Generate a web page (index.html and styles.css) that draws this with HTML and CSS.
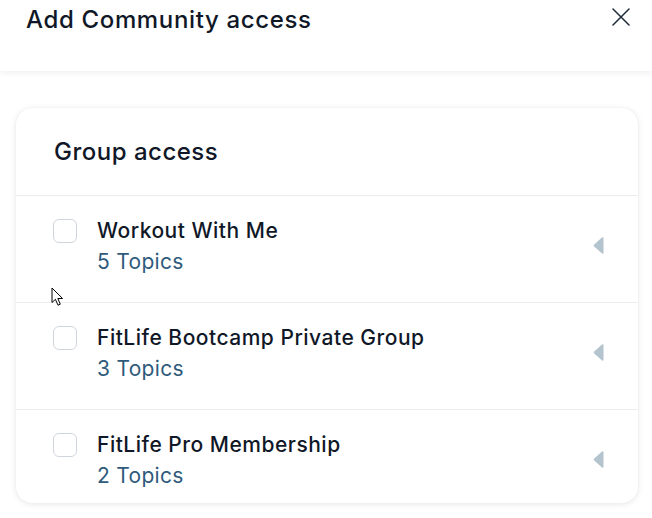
FILE: index.html
```html
<!DOCTYPE html>
<html lang="en">
<head>
<meta charset="utf-8">
<title>Add Community access</title>
<link rel="stylesheet" href="styles.css">
</head>
<body>
<div class="dialog">
  <header class="dialog-header">
    <h1 class="dialog-title">Add Community access</h1>
    <button class="close-btn" aria-label="Close">
      <svg width="18" height="18" viewBox="0 0 18 18" fill="none"><path d="M1 1L17 17M17 1L1 17" stroke="#1d2939" stroke-width="1.5" stroke-linecap="round"/></svg>
    </button>
  </header>
  <main class="dialog-body">
    <section class="card">
      <div class="card-head">Group access</div>
      <div class="row">
        <span class="checkbox"></span>
        <div class="row-text">
          <div class="row-title">Workout With Me</div>
          <div class="row-sub">5 Topics</div>
        </div>
        <span class="caret"><svg width="11" height="19" viewBox="0 0 11 19"><path d="M9 1.5 Q10.5 0.8 10.5 2.5 V16.5 Q10.5 18.2 9 17.5 L1.2 10.5 Q0.2 9.5 1.2 8.5 Z" fill="#b4c4cf"/></svg></span>
      </div>
      <div class="row">
        <span class="checkbox"></span>
        <div class="row-text">
          <div class="row-title">FitLife Bootcamp Private Group</div>
          <div class="row-sub">3 Topics</div>
        </div>
        <span class="caret"><svg width="11" height="19" viewBox="0 0 11 19"><path d="M9 1.5 Q10.5 0.8 10.5 2.5 V16.5 Q10.5 18.2 9 17.5 L1.2 10.5 Q0.2 9.5 1.2 8.5 Z" fill="#b4c4cf"/></svg></span>
      </div>
      <div class="row row-last">
        <span class="checkbox"></span>
        <div class="row-text">
          <div class="row-title">FitLife Pro Membership</div>
          <div class="row-sub">2 Topics</div>
        </div>
        <span class="caret"><svg width="11" height="19" viewBox="0 0 11 19"><path d="M9 1.5 Q10.5 0.8 10.5 2.5 V16.5 Q10.5 18.2 9 17.5 L1.2 10.5 Q0.2 9.5 1.2 8.5 Z" fill="#b4c4cf"/></svg></span>
      </div>
    </section>
  </main>
  <svg class="cursor" width="14" height="20" viewBox="0 0 14 20"><path d="M1 1 V15.5 L4.4 12.3 L7 18.2 L9.3 17.2 L6.8 11.5 L11.6 11.5 Z" fill="#fff" stroke="#000" stroke-width="1" stroke-linejoin="round"/></svg>
</div>
</body>
</html>
```
FILE: styles.css
```css
* { box-sizing: border-box; }
html, body { margin: 0; padding: 0; background: #fff; }
body {
  font-family: Inter, "Noto Sans", "Liberation Sans", sans-serif;
  color: #101828;
  width: 652px;
  height: 518px;
  overflow: hidden;
}
.dialog { position: relative; height: 518px; }
.dialog-header {
  height: 71px;
  display: flex;
  align-items: flex-start;
  justify-content: space-between;
  padding: 5px 22px 0 26px;
  background: #fff;
  box-shadow: 0 2px 6px rgba(16, 24, 40, 0.07);
  position: relative;
  z-index: 1;
}
.dialog-title {
  margin: 0;
  font-size: 24px;
  line-height: 30px;
  font-weight: 500;
  color: #101828;
  letter-spacing: 0.65px;
}
.close-btn {
  border: 0;
  background: none;
  padding: 0;
  margin-top: 3px;
  width: 18px;
  height: 18px;
  display: flex;
}
.dialog-body { padding: 37px 14px 0 16px; }
.card {
  background: #fff;
  border-radius: 16px;
  box-shadow: 0 1px 6px rgba(16, 24, 40, 0.10), 0 0 1px rgba(16, 24, 40, 0.08);
  overflow: hidden;
}
.card-head {
  height: 88px;
  display: flex;
  align-items: center;
  padding: 0 38px;
  font-size: 24px;
  font-weight: 500;
  letter-spacing: 0.5px;
  color: #101828;
  border-bottom: 1px solid #eaecf0;
}
.row {
  display: flex;
  align-items: flex-start;
  padding: 22px 34px 0 37px;
  height: 107px;
  border-bottom: 1px solid #eaecf0;
}
.row-last { border-bottom: 0; height: 93px; }
.checkbox {
  width: 24px;
  height: 24px;
  border: 1px solid #d0d5dd;
  border-radius: 6px;
  flex: none;
  margin-top: 1px;
}
.row-text { flex: 1; margin-left: 20px; }
.row-title {
  font-size: 21px;
  line-height: 26px;
  font-weight: 500;
  letter-spacing: 0.5px;
  color: #101828;
}
.row-sub {
  font-size: 21px;
  line-height: 26px;
  margin-top: 5px;
  letter-spacing: 0.3px;
  color: #2e5a7c;
}
.caret { display: flex; margin-top: 18px; }
.cursor { position: absolute; left: 51px; top: 287px; z-index: 2; }
```
